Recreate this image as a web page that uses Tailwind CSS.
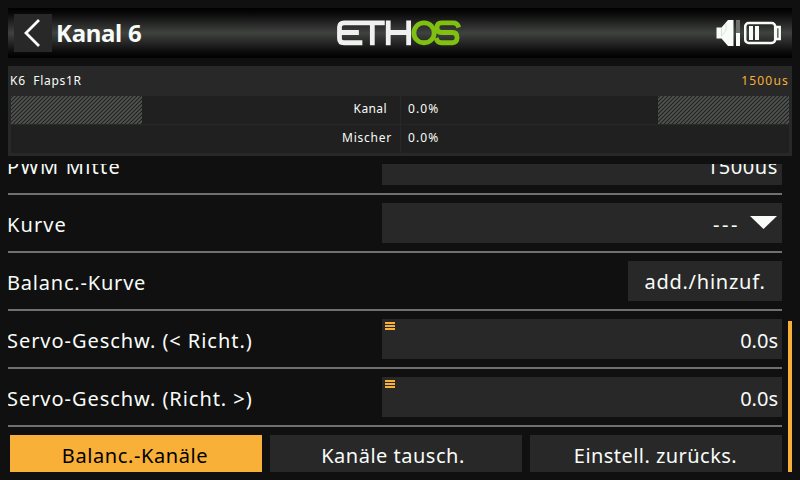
<!DOCTYPE html>
<html lang="de">
<head>
<meta charset="utf-8">
<title>Kanal 6</title>
<script src="https://cdn.jsdelivr.net/npm/@tailwindcss/browser@4"></script>
</head>
<body class="w-[800px] h-[480px] overflow-hidden bg-[#101010] p-2 text-[#f8fcf8] font-['Noto_Sans',sans-serif] whitespace-nowrap">
<header class="flex h-[50px] items-center justify-between bg-[linear-gradient(to_bottom,#000_0%,#080808_10%,#404240_50%,#080808_90%,#000_100%)] pl-1.5 pr-[11px]">
  <div class="flex w-[325px] items-center">
    <button class="flex size-[38px] items-center justify-center bg-[#282828]">
      <svg class="size-[38px]" viewBox="0 0 38 38" fill="none" stroke="#f8fcf8" stroke-width="2.8"><path d="M25 6 12 19 25 32"/></svg>
    </button>
    <h1 class="ml-1 text-[24px] leading-[38px] font-bold tracking-[-0.3px]">Kanal 6</h1>
  </div>
  <svg class="h-[26px] w-[124px]" viewBox="0 0 124 26" fill="none" stroke-width="4.8" role="img" aria-label="ETHOS">
    <g stroke="#f0f0f0"><path d="M48 2.800H7Q2.500 2.800 2.500 7V18.500Q2.500 22.800 7 22.800H25.500M2.500 12.500H22M35.500 3V25.200"/><path d="M51.500 .500V25.200M72 .500V25.200M51.500 12.500H72"/></g>
    <g stroke="#80c010"><rect x="77.300" y="2.900" width="20.400" height="19.900" rx="9.900"/><path d="M122.500 7.500Q121 2.900 117 2.900H105Q100.500 2.900 100.500 7.700T105 12.500H116Q120.700 12.500 120.700 17.600T116 22.800H105Q101 22.800 99.500 18"/></g>
  </svg>
  <div class="flex w-[322px] items-center justify-end gap-1">
    <svg class="h-[26px] w-6" viewBox="0 0 24 26"><path fill="#f8fcf8" d="M.500 7.500H5.500L12 0H17.500V26H12L5.500 18.500H.500Z"/><path d="M5.500 8V16L10 10.500V3" fill="none" stroke="#c8ccc8" stroke-width=".6"/><path fill="#707070" d="M20 0h4v13h-4z"/><path fill="#f8fcf8" d="M20 13h4v13h-4z"/></svg>
    <svg class="h-6 w-[37px]" viewBox="0 0 37 24" fill="none" stroke="#f8fcf8" stroke-width="2.500"><rect x="1.200" y="2" width="30" height="20" rx="3.500"/><path d="M32 6H35.700V18H32Z"/><path fill="#f8fcf8" stroke="none" d="M5 5h4v14H5zM11 5h4v14h-4z"/></svg>
  </div>
</header>

<section class="mt-2 h-[90px] bg-[#282828] px-[3px] text-[12px]">
  <div class="-ml-px flex h-[30px] justify-between leading-[30px]">
    <span class="tracking-[0.7px]">K6&nbsp; Flaps1R</span>
    <span class="tracking-[1.2px] text-[#f8b038]">1500us</span>
  </div>
  <div class="grid grid-cols-[389px_388px] gap-px leading-[26px]">
    <div class="flex h-7 justify-between bg-[#202020]">
      <svg class="h-7 w-[131px]"><defs><pattern id="hatch" width="4" height="4" patternUnits="userSpaceOnUse"><path d="M-1 1 1-1M-1 5 5-1M3 5 5 3" stroke="#505450" stroke-width="1.700"/></pattern></defs><rect width="131" height="28" fill="url(#hatch)"/></svg>
      <span class="pr-[13px] tracking-[0.4px]">Kanal</span>
    </div>
    <div class="flex h-7 justify-between bg-[#202020] pl-[7px]">
      <span class="tracking-[1.1px]">0.0%</span>
      <svg class="h-7 w-[131px]"><rect width="131" height="28" fill="url(#hatch)"/></svg>
    </div>
    <div class="h-7 bg-[#202020] pr-2 text-right tracking-[0.75px]">Mischer</div>
    <div class="h-7 bg-[#202020] pl-[7px] tracking-[1.1px]">0.0%</div>
  </div>
</section>

<main class="mt-2 flex h-[308px] justify-between overflow-hidden text-[20px] leading-10">
  <div class="-mt-[27px] w-[774px]">
    <div class="flex h-[58px] justify-between border-b-2 border-[#707070] pt-2">
      <span class="-ml-px pt-0.5 tracking-[1.2px]">PWM Mitte</span>
      <div class="h-10 w-[400px] bg-[#282828] pt-0.5 pr-1 text-right tracking-[0.6px]">1500us</div>
    </div>
    <div class="flex h-[58px] justify-between border-b-2 border-[#707070] pt-2">
      <span class="-ml-px pt-0.5 tracking-[1.1px]">Kurve</span>
      <div class="flex h-10 w-[400px] justify-end bg-[#282828] pt-px pr-[5px]"><span class="pt-px tracking-[2.6px]">---</span><svg class="ml-2.5 mt-3 h-[13px] w-[27px]" viewBox="0 0 27 13"><path fill="#f8fcf8" d="M0 0H27L13.500 13Z"/></svg></div>
    </div>
    <div class="flex h-[58px] justify-between border-b-2 border-[#707070] pt-2">
      <span class="-ml-px pt-0.5 tracking-[0.8px]">Balanc.-Kurve</span>
      <button class="h-10 w-[154px] bg-[#282828] pt-px tracking-[0.75px]">add./hinzuf.</button>
    </div>
    <div class="flex h-[58px] justify-between border-b-2 border-[#707070] pt-2">
      <span class="-ml-px pt-0.5 tracking-[0.95px]">Servo-Geschw. (&lt; Richt.)</span>
      <div class="flex h-10 w-[400px] justify-between bg-[#282828] pt-px pr-1 pl-[3px]"><svg class="mt-0.5 h-2 w-2.5" viewBox="0 0 10 8"><path fill="#f8b038" d="M0 0h10v2H0zM0 3h10v2H0zM0 6h10v2H0z"/></svg><span class="pt-px">0.0s</span></div>
    </div>
    <div class="flex h-[58px] justify-between border-b-2 border-[#707070] pt-2">
      <span class="-ml-px pt-0.5 tracking-[0.95px]">Servo-Geschw. (Richt. &gt;)</span>
      <div class="flex h-10 w-[400px] justify-between bg-[#282828] pt-px pr-1 pl-[3px]"><svg class="mt-0.5 h-2 w-2.5" viewBox="0 0 10 8"><path fill="#f8b038" d="M0 0h10v2H0zM0 3h10v2H0zM0 6h10v2H0z"/></svg><span class="pt-px">0.0s</span></div>
    </div>
    <div class="flex gap-2 pt-2 pl-0.5">
      <button class="h-10 w-[252px] bg-[#f8b038] pt-px pr-0.5 tracking-[0.6px] text-black">Balanc.-Kanäle</button>
      <button class="h-10 w-[252px] bg-[#282828] pt-px pr-1.5 tracking-[0.5px]">Kanäle tausch.</button>
      <button class="h-10 w-[252px] bg-[#282828] pt-px pr-px tracking-[0.45px]">Einstell. zurücks.</button>
    </div>
  </div>
  <div class="mt-[157px] h-[151px] w-1 bg-[#f8b038]"></div>
</main>
</body>
</html>
